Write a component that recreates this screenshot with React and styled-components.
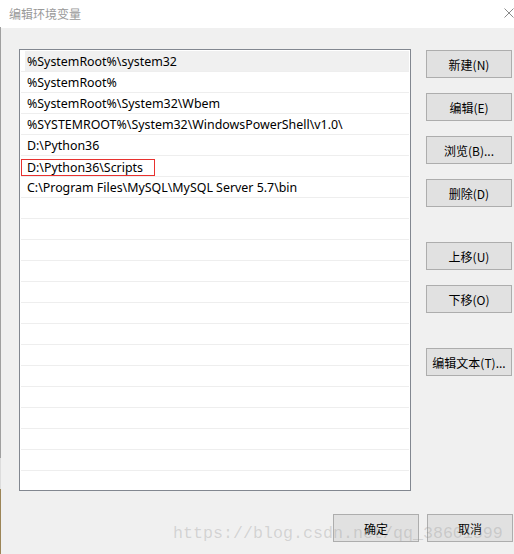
import styled, { createGlobalStyle } from "styled-components";

const GlobalStyle = createGlobalStyle`
    html, body {
        margin: 0;
        padding: 0;
        background: #f0f0f0;
    }
    body {
        font-family: "Noto Sans", "Noto Sans CJK SC", sans-serif;
        font-size: 12px;
        color: #000;
    }
`

const Window = styled.div`
    position: relative;
    box-sizing: border-box;
    width: 514px;
    height: 554px;
    overflow: hidden;
    background: #f0f0f0;
    border-left: 1px solid transparent;
    border-image: linear-gradient(to bottom, #ffffff 0 28px, #a0a0a0 28px 457px, #dcdcdc 457px 488px, #9c8557 488px) 1;
`

const TitleBar = styled.div`
    height: 28px;
    background: #ffffff;
    display: flex;
    align-items: center;
    justify-content: space-between;
    padding-left: 8px;
`

const Title = styled.span`
    font-family: "Noto Sans CJK SC", sans-serif;
    font-size: 12px;
    color: #999999;
    margin-top: -2px;
`

const Close = styled.svg`
    width: 10px;
    height: 10px;
    margin-top: -3px;
    flex-shrink: 0;
`

const Body = styled.div`
    display: flex;
    gap: 15px;
    padding: 21px 0 0 18px;
`

const List = styled.div`
    box-sizing: border-box;
    width: 392px;
    height: 442px;
    border: 1px solid #828790;
    background: #ffffff;
    padding: 1px 1px 0 1px;
    overflow: hidden;
`

const Row = styled.div`
    box-sizing: border-box;
    height: 21px;
    border-bottom: 1px solid #eeeeee;
    padding-left: 6px;
    display: flex;
    align-items: center;
    white-space: nowrap;
    font-size: 12.4px;
    background: ${p => p.$active ? "linear-gradient(to right, #ffffff 4px, #f0f0f0 4px)" : "transparent"};
`

const Mark = styled.span`
    box-sizing: border-box;
    height: 17px;
    margin: 3px 0 0 -6px;
    padding: 0 11px 0 5px;
    border: 1px solid #e8312f;
    display: inline-flex;
    align-items: center;
`

const Side = styled.div`
    display: flex;
    flex-direction: column;
    gap: 15px;
    padding-top: 1px;
`

const Button = styled.button`
    box-sizing: border-box;
    width: 86px;
    height: 28px;
    margin-top: ${p => p.$spaced ? "20px" : "0"};
    padding: 0;
    background: #e1e1e1;
    border: 1px solid #adadad;
    font-family: "Noto Sans CJK SC", sans-serif;
    font-size: 12px;
    color: #000;
`

const Footer = styled.div`
    display: flex;
    justify-content: flex-end;
    gap: 8px;
    padding: 23px 1px 0 0;
`

const Watermark = styled.div`
    position: absolute;
    left: 172px;
    top: 526px;
    font-family: "Liberation Mono", monospace;
    font-size: 16.67px;
    line-height: 1;
    color: rgba(150, 150, 150, 0.32);
    white-space: nowrap;
    pointer-events: none;
`

const paths = [
    "%SystemRoot%\\system32",
    "%SystemRoot%",
    "%SystemRoot%\\System32\\Wbem",
    "%SYSTEMROOT%\\System32\\WindowsPowerShell\\v1.0\\",
    "D:\\Python36",
    "D:\\Python36\\Scripts",
    "C:\\Program Files\\MySQL\\MySQL Server 5.7\\bin",
]

const rows = [...paths, ...Array(14).fill("")]

const App = () => {
    return (
        <Window>
            <GlobalStyle />
            <TitleBar>
                <Title>编辑环境变量</Title>
                <Close viewBox="0 0 10 10">
                    <path d="M0.5 0.5 L9.5 9.5 M9.5 0.5 L0.5 9.5" stroke="#8a8a8a" strokeWidth="1" fill="none" />
                </Close>
            </TitleBar>
            <Body>
                <List>
                    {rows.map((text, i) => (
                        <Row key={i} $active={i === 0}>
                            {i === 5 ? <Mark>{text}</Mark> : text}
                        </Row>
                    ))}
                </List>
                <Side>
                    <Button>新建(N)</Button>
                    <Button>编辑(E)</Button>
                    <Button>浏览(B)...</Button>
                    <Button>删除(D)</Button>
                    <Button $spaced>上移(U)</Button>
                    <Button>下移(O)</Button>
                    <Button $spaced>编辑文本(T)...</Button>
                </Side>
            </Body>
            <Footer>
                <Button>确定</Button>
                <Button>取消</Button>
            </Footer>
            <Watermark>https://blog.csdn.net/qq_38601599</Watermark>
        </Window>
    )
}

export default App
